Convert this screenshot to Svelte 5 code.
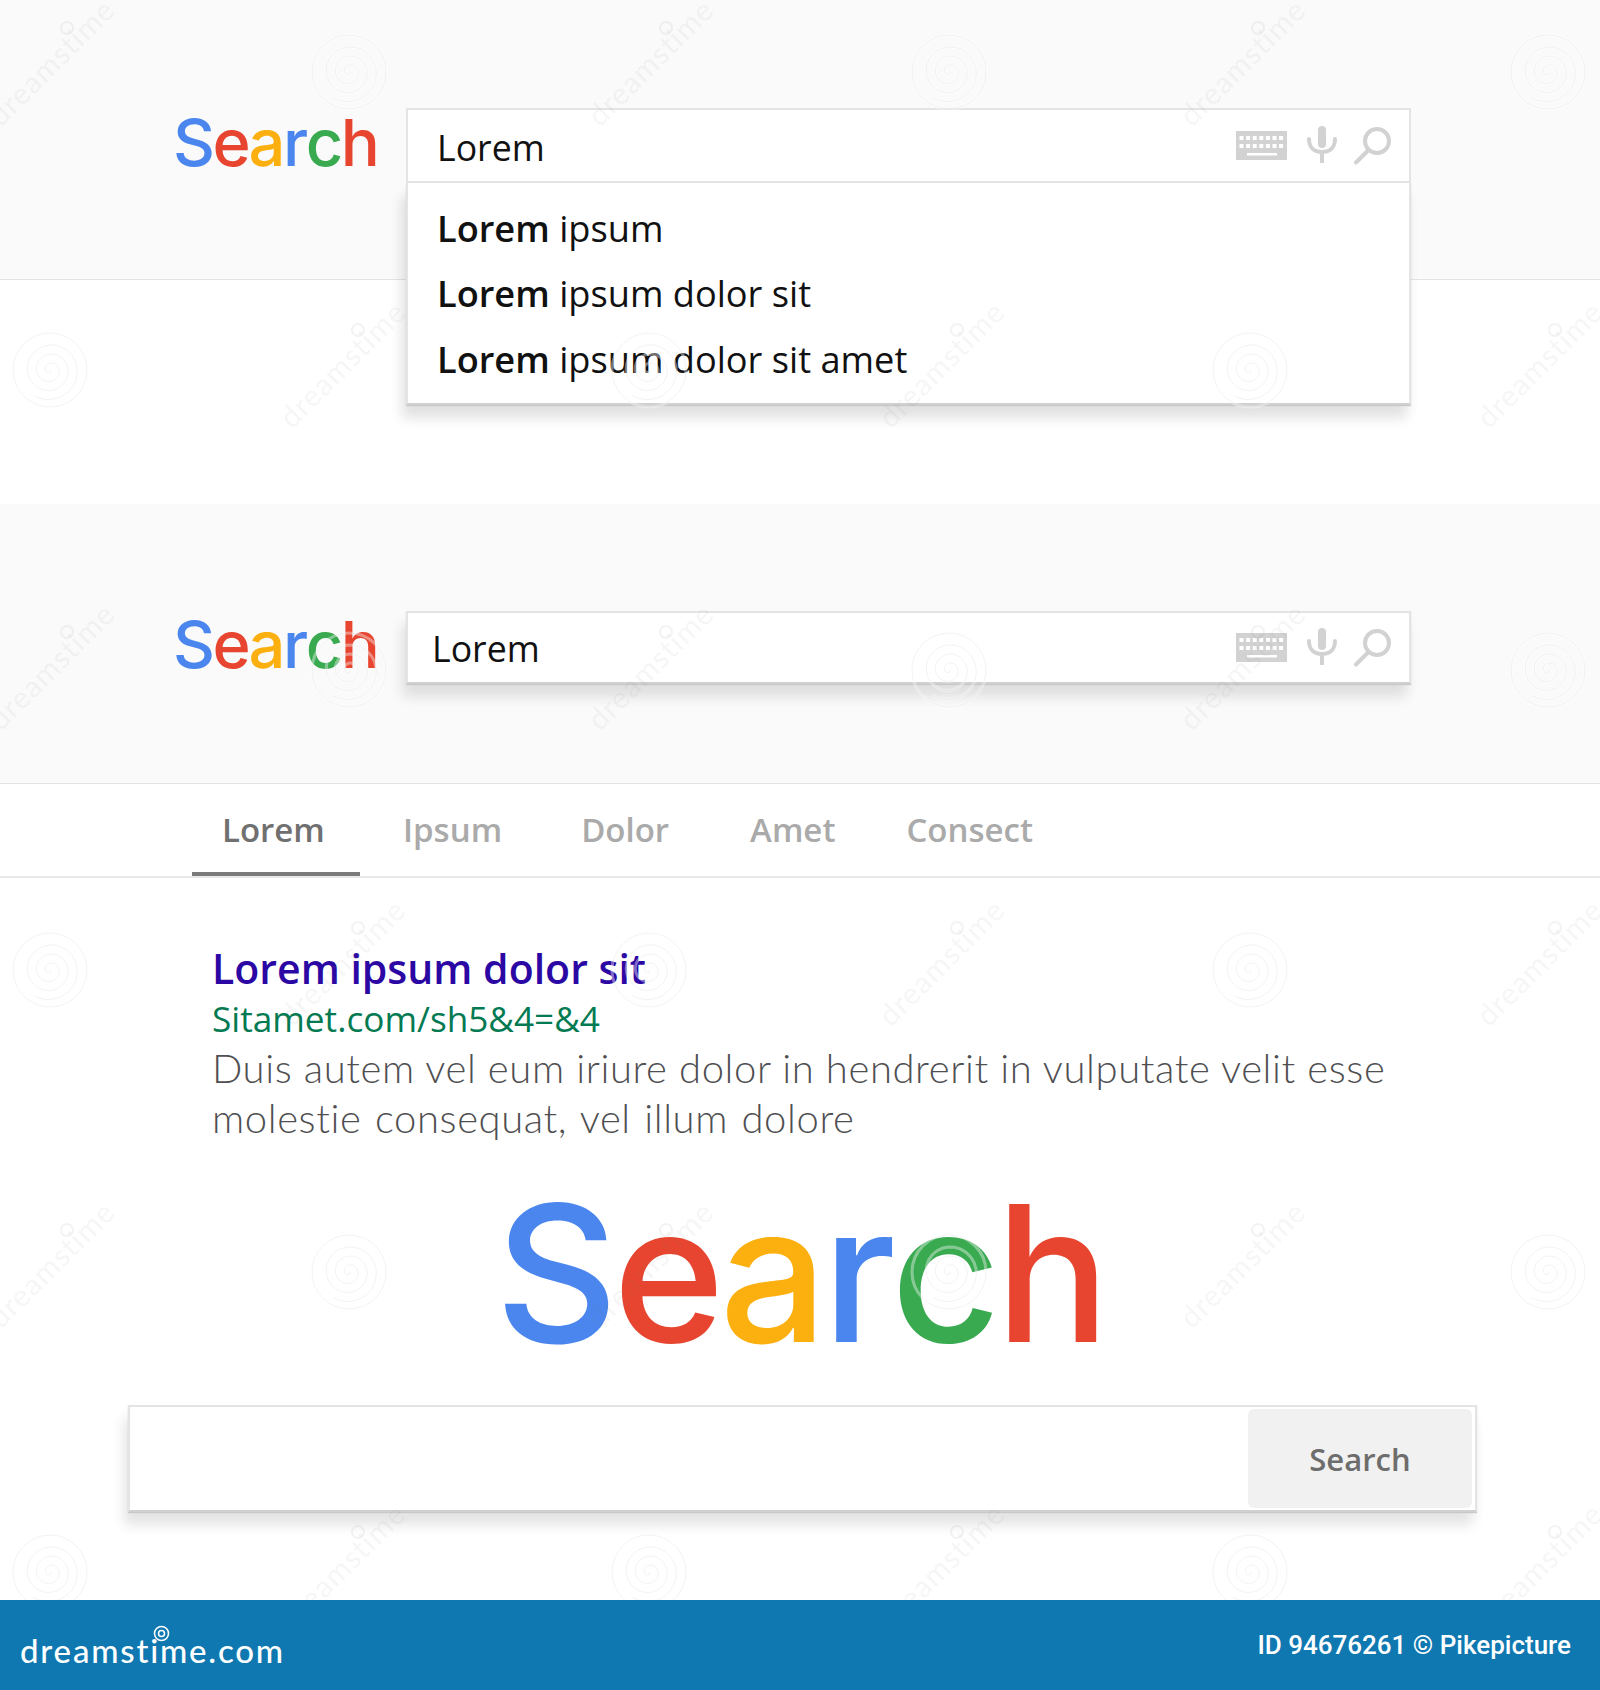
<script>
  const letters = [['S','#4a86ee'],['e','#e7452f'],['a','#fcb010'],['r','#4a86ee'],['c','#3aaa51'],['h','#e7452f']];
  const suggestions = ['', ' dolor sit', ' dolor sit amet'];
  const tabs = ['Lorem','Ipsum','Dolor','Amet','Consect'];
  const spirals = [[349,72],[949,72],[1548,72],[50,370],[649,370],[1250,370],[349,670],[949,670],[1548,670],[50,970],[649,970],[1250,970],[349,1272],[949,1272],[1548,1272],[50,1572],[649,1572],[1250,1572]];
  const marks = [[59,70],[658,70],[1250,70],[350,372],[949,372],[1547,372],[59,674],[658,674],[1250,674],[350,970],[949,970],[1547,970],[59,1272],[658,1272],[1250,1272],[350,1574],[949,1574],[1547,1574]];
  const spiralPath = (() => {
    let d = 'M0 0';
    for (let t = 0; t <= 21; t += 0.25) {
      const r = t * 1.45;
      d += `L${(r * Math.cos(t)).toFixed(1)} ${(r * Math.sin(t)).toFixed(1)}`;
    }
    return d;
  })();
</script>

{#snippet logo(cls)}
  <div class="logo {cls}">{#each letters as [ch, col]}<span style="color:{col}">{ch}</span>{/each}</div>
{/snippet}

{#snippet icons()}
  <div class="icons">
    <svg width="51" height="29" viewBox="0 0 51 29">
      <rect width="51" height="29" fill="#d2d2d2"/>
      <g fill="#fff">
        {#each [0,1,2,3,4,5,6] as i}
          <rect x={3.5 + i * 6.6} y="5" width="4" height="4"/>
          <rect x={3.5 + i * 6.6} y="13" width="4" height="4"/>
        {/each}
        <rect x="11" y="22" width="30" height="2.5"/>
      </g>
    </svg>
    <svg width="30" height="37" viewBox="0 0 30 37">
      <rect x="11" y="0" width="8" height="22" rx="4" fill="#d2d2d2"/>
      <path d="M2 13c0 8 5 13 13 13s13-5 13-13M15 26v10" fill="none" stroke="#d2d2d2" stroke-width="4" stroke-linecap="round"/>
    </svg>
    <svg width="38" height="38" viewBox="0 0 38 38">
      <circle cx="24" cy="14" r="12" fill="none" stroke="#d2d2d2" stroke-width="4"/>
      <path d="M15.5 23L3 35.5" fill="none" stroke="#d2d2d2" stroke-width="4" stroke-linecap="round"/>
    </svg>
  </div>
{/snippet}

<div class="page">
  <section class="band first">
    {@render logo('small')}
    <div class="combo">
      <div class="field open">
        <span class="query">Lorem</span>
        {@render icons()}
      </div>
      <div class="menu">
        {#each suggestions as s}
          <div class="suggestion"><b>Lorem</b> ipsum{s}</div>
        {/each}
      </div>
    </div>
  </section>

  <section class="band second">
    {@render logo('small')}
    <div class="combo">
      <div class="field raised">
        <span class="query tight">Lorem</span>
        {@render icons()}
      </div>
    </div>
  </section>

  <nav class="tabs">
    {#each tabs as t, i}
      <span class="tab" class:active={i === 0}>{t}</span>
    {/each}
  </nav>

  <article class="result">
    <h3>Lorem ipsum dolor sit</h3>
    <div class="url">Sitamet.com/sh5&amp;4=&amp;4</div>
    <p>Duis autem vel eum iriure dolor in hendrerit in vulputate velit esse<br><span class="wide">molestie consequat, vel illum dolore</span></p>
  </article>

  {@render logo('big')}

  <div class="bigbox">
    <div class="spacer"></div>
    <button>Search</button>
  </div>

  <footer>
    <div class="brand">dreamstime.com
      <svg class="swirl" width="17" height="17" viewBox="0 0 17 17"><circle cx="8.5" cy="8.5" r="7" fill="none" stroke="#fff" stroke-width="1.6"/><circle cx="8.5" cy="8.5" r="3" fill="none" stroke="#fff" stroke-width="1.6"/></svg>
    </div>
    <div class="credit">ID 94676261 © Pikepicture</div>
  </footer>

  <svg class="watermark" width="1600" height="1600" viewBox="0 0 1600 1600">
    {#each spirals as [x, y]}
      <g transform="translate({x} {y})" fill="none">
        <circle r="37" stroke="#fff" stroke-opacity=".4" stroke-width="3"/>
        <path d={spiralPath} stroke="#fff" stroke-opacity=".4" stroke-width="3"/>
        <circle r="37" stroke="#888" stroke-opacity=".1" stroke-width="1"/>
        <path d={spiralPath} stroke="#888" stroke-opacity=".1" stroke-width="1"/>
      </g>
    {/each}
    {#each marks as [x, y]}
      <g transform="translate({x} {y})">
        <text transform="rotate(-45)" text-anchor="middle" class="wm">dreamstime</text>
        <circle cx="8" cy="-42" r="6" fill="none" stroke="#888" stroke-opacity=".1" stroke-width="2"/>
      </g>
    {/each}
  </svg>
</div>

<style>
  :global(body) { margin: 0; background: #fff; }
  .page { position: relative; width: 1600px; height: 1690px; overflow: hidden; font-family: "Open Sans", sans-serif; }
  .band { height: 279px; background: #fafafa; border-bottom: 1px solid #e3e3e3; display: flex; padding-left: 174px; position: relative; }
  .first { margin-bottom: 224px; }
  .band .combo { margin-left: 28px; }
  .first .combo { margin-top: 108px; }
  .second .combo { margin-top: 107px; }
  .logo { font-family: Inter, sans-serif; display: flex; line-height: 1; }
  .small { font-size: 65px; letter-spacing: -2.4px; height: 66px; margin-top: 110px; width: 204px; font-weight: 500; margin-left: -1px; margin-right: 1px; }
  .second .small { margin-top: 108px; }
  .combo { position: relative; width: 1005px; }
  .field { height: 73px; box-sizing: border-box; background: #fff; border: 2px solid #e4e4e4; display: flex; align-items: center; justify-content: space-between; padding: 0 18px 0 29px; color: #111; position: relative; }
  .field.open { height: 75px; }
  .raised { box-shadow: 0 1px 1px #c8c8c8, -4px 13px 12px rgba(0,0,0,.11); border-bottom-color: #d0d0d0; }
  .query { font-size: 35.7px; line-height: 1; position: relative; top: 2px; }
  .query.tight { margin-left: -5px; top: 1px; }
  .icons { display: flex; align-items: center; gap: 20px; }
  .icons svg:nth-child(2) { margin-right: -4px; margin-top: -2px; }
  .menu { position: absolute; left: 0; right: 0; top: 75px; height: 222px; box-sizing: border-box; padding-top: 13px; background: #fff; border: 2px solid #e4e4e4; border-top: 0; border-bottom-color: #d0d0d0; box-shadow: 0 1px 1px #c8c8c8, -4px 13px 12px rgba(0,0,0,.12); z-index: 2; }
  .suggestion { font-size: 36.2px; line-height: 65.4px; padding-left: 29px; color: #111; white-space: nowrap; }
  .suggestion b { font-weight: 600; }
  .tabs { display: flex; height: 92px; padding-left: 192px; border-bottom: 2px solid #e8e8e8; font-size: 33px; font-weight: 600; color: #aaa; align-items: stretch; }
  .tab { padding: 24px 36px 0 43px; box-sizing: border-box; height: 92px; line-height: 44px; }
  .tab:nth-child(4) { margin-left: 2px; }
  .tab:last-child { margin-left: -8px; }
  .tab.active { color: #707070; padding: 24px 38px 0 30px; border-bottom: 4px solid #7a7a7a; width: 168px; }
  .result { padding: 65px 0 0 212px; height: 278px; box-sizing: border-box; }
  h3 { margin: 0; font-size: 41px; font-weight: 600; color: #2b08a4; line-height: 50px; }
  .url { font-size: 35.2px; color: #047a52; line-height: 50px; }
  p { margin: 0; font-family: Lato, sans-serif; font-weight: 300; font-size: 40px; letter-spacing: .6px; line-height: 50px; color: #4f4f52; white-space: nowrap; }
  .wide { word-spacing: 2px; }
  .big { font-size: 190px; letter-spacing: -5px; justify-content: center; height: 180px; margin-top: 22px; font-weight: 500; }
  .bigbox { margin-left: 128px; width: 1349px; height: 107px; box-sizing: border-box; background: #fff; border: 2px solid #e4e4e4; border-bottom-color: #d0d0d0; box-shadow: 0 1px 1px #c8c8c8, -4px 13px 12px rgba(0,0,0,.11); display: flex; padding: 2px 3px 2px 0; position: relative; top: 47px; }
  .spacer { flex: 1; }
  button { width: 224px; border: 0; border-radius: 6px; background: #f1f1f1; color: #6d6d6d; font: 600 31px "Open Sans", sans-serif; padding: 0; }
  footer { position: absolute; left: 0; right: 0; bottom: 0; height: 90px; background: #0f78b1; color: #fff; display: flex; justify-content: space-between; align-items: center; padding: 0 29px 0 20px; }
  .brand { position: relative; font: 500 33px Lato, sans-serif; letter-spacing: 1.8px; margin-top: 10px; }
  .swirl { position: absolute; left: 133px; top: -5px; }
  .credit { font: 500 26px Roboto, sans-serif; }
  .watermark { position: absolute; left: 0; top: 0; pointer-events: none; z-index: 5; }
  .wm { font: 400 30px Lato, sans-serif; fill: #777; fill-opacity: .08; letter-spacing: 1px; }
</style>
